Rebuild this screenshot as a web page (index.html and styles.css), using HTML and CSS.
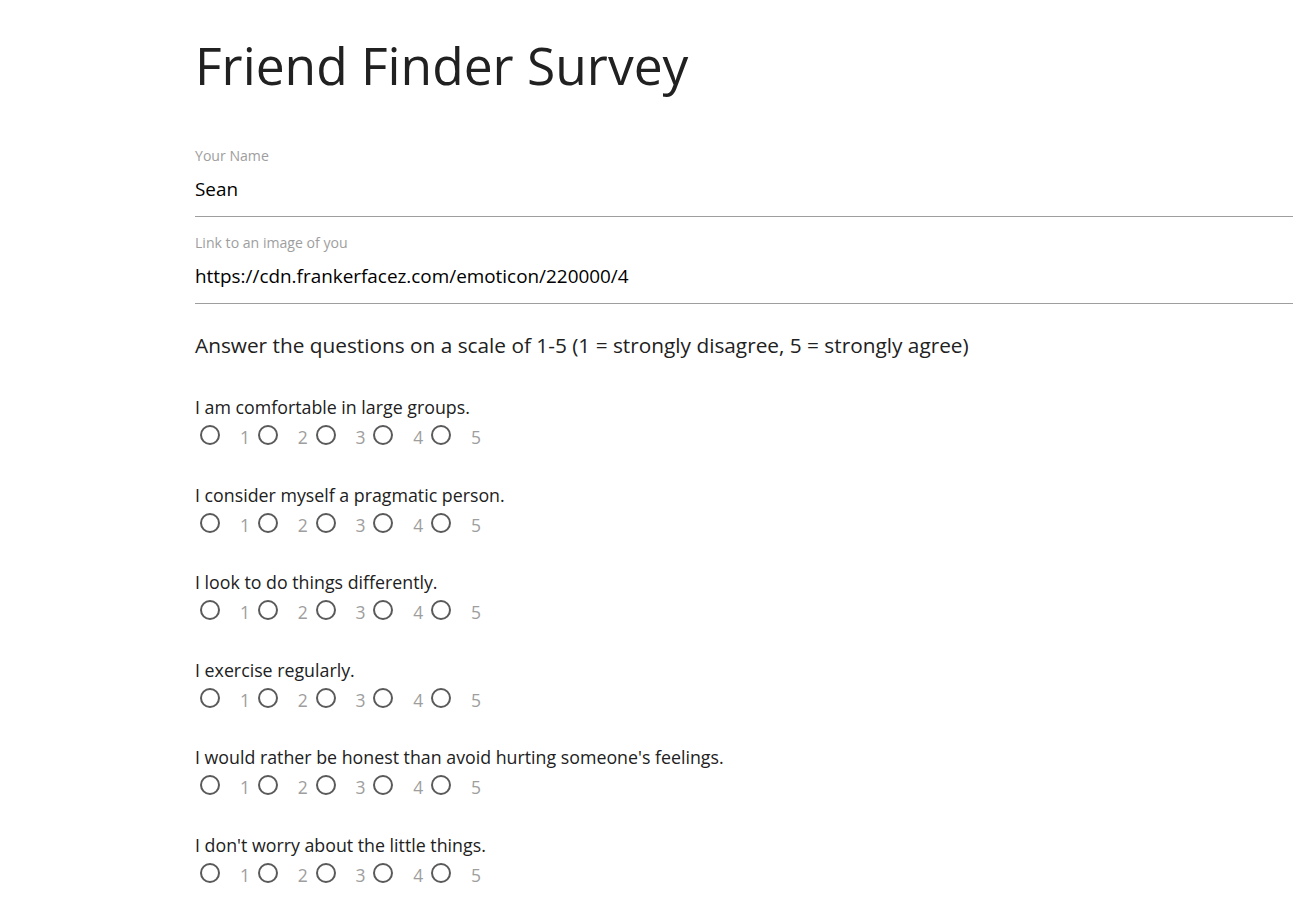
FILE: index.html
```html
<!DOCTYPE html>
<html lang="en">
<head>
<meta charset="utf-8">
<title>Friend Finder Survey</title>
<link rel="stylesheet" href="styles.css">
</head>
<body>
<main class="page">
  <h1 class="title">Friend Finder Survey</h1>
  <div class="field">
    <label class="field-label">Your Name</label>
    <div class="field-input">Sean</div>
  </div>
  <div class="field">
    <label class="field-label">Link to an image of you</label>
    <div class="field-input">https://cdn.frankerfacez.com/emoticon/220000/4</div>
  </div>
  <h5 class="intro">Answer the questions on a scale of 1-5 (1 = strongly disagree, 5 = strongly agree)</h5>

  <div class="question">
    <p class="q-text">I am comfortable in large groups.</p>
    <div class="scale">
      <span class="opt"><span class="radio"></span><span class="num">1</span></span>
      <span class="opt"><span class="radio"></span><span class="num">2</span></span>
      <span class="opt"><span class="radio"></span><span class="num">3</span></span>
      <span class="opt"><span class="radio"></span><span class="num">4</span></span>
      <span class="opt"><span class="radio"></span><span class="num">5</span></span>
    </div>
  </div>
  <div class="question">
    <p class="q-text">I consider myself a pragmatic person.</p>
    <div class="scale">
      <span class="opt"><span class="radio"></span><span class="num">1</span></span>
      <span class="opt"><span class="radio"></span><span class="num">2</span></span>
      <span class="opt"><span class="radio"></span><span class="num">3</span></span>
      <span class="opt"><span class="radio"></span><span class="num">4</span></span>
      <span class="opt"><span class="radio"></span><span class="num">5</span></span>
    </div>
  </div>
  <div class="question">
    <p class="q-text">I look to do things differently.</p>
    <div class="scale">
      <span class="opt"><span class="radio"></span><span class="num">1</span></span>
      <span class="opt"><span class="radio"></span><span class="num">2</span></span>
      <span class="opt"><span class="radio"></span><span class="num">3</span></span>
      <span class="opt"><span class="radio"></span><span class="num">4</span></span>
      <span class="opt"><span class="radio"></span><span class="num">5</span></span>
    </div>
  </div>
  <div class="question">
    <p class="q-text">I exercise regularly.</p>
    <div class="scale">
      <span class="opt"><span class="radio"></span><span class="num">1</span></span>
      <span class="opt"><span class="radio"></span><span class="num">2</span></span>
      <span class="opt"><span class="radio"></span><span class="num">3</span></span>
      <span class="opt"><span class="radio"></span><span class="num">4</span></span>
      <span class="opt"><span class="radio"></span><span class="num">5</span></span>
    </div>
  </div>
  <div class="question">
    <p class="q-text">I would rather be honest than avoid hurting someone's feelings.</p>
    <div class="scale">
      <span class="opt"><span class="radio"></span><span class="num">1</span></span>
      <span class="opt"><span class="radio"></span><span class="num">2</span></span>
      <span class="opt"><span class="radio"></span><span class="num">3</span></span>
      <span class="opt"><span class="radio"></span><span class="num">4</span></span>
      <span class="opt"><span class="radio"></span><span class="num">5</span></span>
    </div>
  </div>
  <div class="question">
    <p class="q-text">I don't worry about the little things.</p>
    <div class="scale">
      <span class="opt"><span class="radio"></span><span class="num">1</span></span>
      <span class="opt"><span class="radio"></span><span class="num">2</span></span>
      <span class="opt"><span class="radio"></span><span class="num">3</span></span>
      <span class="opt"><span class="radio"></span><span class="num">4</span></span>
      <span class="opt"><span class="radio"></span><span class="num">5</span></span>
    </div>
  </div>
</main>
</body>
</html>
```
FILE: styles.css
```css
html, body {
  margin: 0;
  padding: 0;
  background: #ffffff;
}
body {
  font-family: "Open Sans", "Noto Sans", sans-serif;
  color: #212121;
  overflow: hidden;
}
.page {
  margin-left: 195px;
}
.title {
  margin: 37px 0 0 0;
  font-size: 51.5px;
  font-weight: 400;
  line-height: 56.65px;
  color: #212121;
}
.field {
  margin-top: 16px;
}
.title + .field {
  margin-top: 52.35px;
}
.field-label {
  display: block;
  font-size: 14.1px;
  line-height: 20px;
  color: #9e9e9e;
}
.field-input {
  font-size: 18.9px;
  line-height: 47px;
  height: 47px;
  padding-bottom: 3px;
  border-bottom: 1px solid #9e9e9e;
  color: #000;
}
.intro {
  margin: 27px 0 0 0;
  font-size: 20.8px;
  font-weight: 400;
  line-height: 28px;
  color: #212121;
}
.question {
  margin-top: 32.5px;
}
.intro + .question {
  margin-top: 36px;
}
.q-text {
  margin: 0;
  font-size: 17.8px;
  line-height: 24px;
}
.scale {
  display: flex;
  height: 30px;
  padding-top: 1px;
  align-items: center;
  padding-left: 5px;
}
.opt {
  display: flex;
  align-items: center;
  width: 57.75px;
}
.radio {
  box-sizing: border-box;
  width: 20px;
  height: 20px;
  border: 2px solid #5a5a5a;
  border-radius: 50%;
  flex: none;
}
.num {
  margin-left: 20px;
  margin-top: 4px;
  font-size: 17.5px;
  color: #9e9e9e;
}
```
